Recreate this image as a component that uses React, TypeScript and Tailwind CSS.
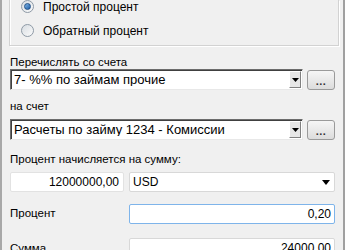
import React from 'react';

const font = { fontFamily: '"Liberation Sans", Arial, sans-serif' };

function Radio({ checked }: { checked?: boolean }) {
    return (
        <div className="w-[13px] h-[13px] rounded-full border border-[#8e9aa6] bg-gradient-to-br from-[#d8dde2] to-[#fbfbfb] flex items-center justify-center">
            {checked && <div className="w-[7px] h-[7px] rounded-full bg-gradient-to-br from-[#7fb4e6] to-[#1b5fa6] border border-[#1f4f86]"></div>}
        </div>
    );
}

function Combo({ text }: { text: string }) {
    return (
        <div className="flex items-center gap-[4px] mr-[8px]">
            <div className="flex-1 h-[21px] flex items-center bg-white border border-t-[#6c6c6c] border-l-[#6c6c6c] border-b-[#e8e8e8] border-r-[#e8e8e8] shadow-[inset_1px_1px_0_#404040]">
                <span className="flex-1 pl-[3px] text-[13px] text-black leading-none truncate">{text}</span>
                <div className="w-[12px] h-[17px] mr-[1px] bg-[#e6e6e6] border border-t-white border-l-white border-b-[#808080] border-r-[#808080] flex items-center justify-center">
                    <svg width="7" height="4" viewBox="0 0 7 4"><path d="M0 0h7L3.5 4z" fill="#000" /></svg>
                </div>
            </div>
            <div className="w-[28px] h-[20px] rounded-[3px] border border-[#9a9a9a] bg-gradient-to-b from-[#f6f6f6] to-[#dcdcdc] flex items-center justify-center">
                <span className="text-[11px] font-bold text-[#333] leading-none tracking-[0.5px] pt-[3px]">...</span>
            </div>
        </div>
    );
}

export default function App() {
    return (
        <div style={font} className="w-[345px] h-[250px] overflow-hidden bg-[#f0f0f0] border-l-2 border-l-[#a8a8a8] border-r-2 border-r-[#a0a0a0] text-[11.5px] text-black">
            <div className="pr-[3px]">
                <div className="ml-[7px] mr-[1px] h-[46px] border-x border-b border-[#d2d2d2] shadow-[inset_1px_0_0_#fff,1px_1px_0_#fff] pl-[11px] flex flex-col gap-[11px] text-[12px]">
                    <div className="flex items-center gap-[9px] h-[13px]">
                        <Radio checked />
                        <span>Простой процент</span>
                    </div>
                    <div className="flex items-center gap-[9px] h-[13px]">
                        <Radio />
                        <span>Обратный процент</span>
                    </div>
                </div>
            </div>

            <div className="pl-[8px] flex flex-col">
                <div className="mt-[9px] h-[14px] leading-[14px]">Перечислять со счета</div>
                <div className="mt-[0px]"><Combo text="7- %% по займам прочие" /></div>
                <div className="mt-[9px] h-[14px] leading-[14px]">на счет</div>
                <div className="mt-[6px]"><Combo text="Расчеты по займу 1234 - Комиссии" /></div>
                <div className="mt-[12px] h-[14px] leading-[14px]">Процент начисляется на сумму:</div>

                <div className="mt-[6px] flex gap-[5px] mr-[8px] text-[12px]">
                    <div className="w-[114px] h-[20px] bg-white border border-[#e2e2e2] rounded-[2px] flex items-center justify-end pr-[4px]">12000000,00</div>
                    <div className="flex-1 h-[20px] bg-white border border-[#d8d8d8] rounded-[2px] flex items-center pl-[3px] pr-[4px]">
                        <span className="flex-1">USD</span>
                        <svg width="8" height="5" viewBox="0 0 8 5"><path d="M0 0h8L4 5z" fill="#000" /></svg>
                    </div>
                </div>

                <div className="mt-[12px] flex items-start mr-[8px] text-[12px]">
                    <span className="w-[119px] pt-[1px] text-[11.5px]">Процент</span>
                    <div className="flex-1 h-[20px] bg-white border border-[#7eb4ea] rounded-[2px] flex items-center justify-end pr-[3px]">0,20</div>
                </div>

                <div className="mt-[14px] flex items-start mr-[8px] text-[12px]">
                    <span className="w-[119px] pt-[2px] text-[11.5px]">Сумма</span>
                    <div className="flex-1 h-[20px] bg-white border border-[#d8d8d8] rounded-[2px] flex items-center justify-end pr-[3px]">24000,00</div>
                </div>
            </div>
        </div>
    );
}
